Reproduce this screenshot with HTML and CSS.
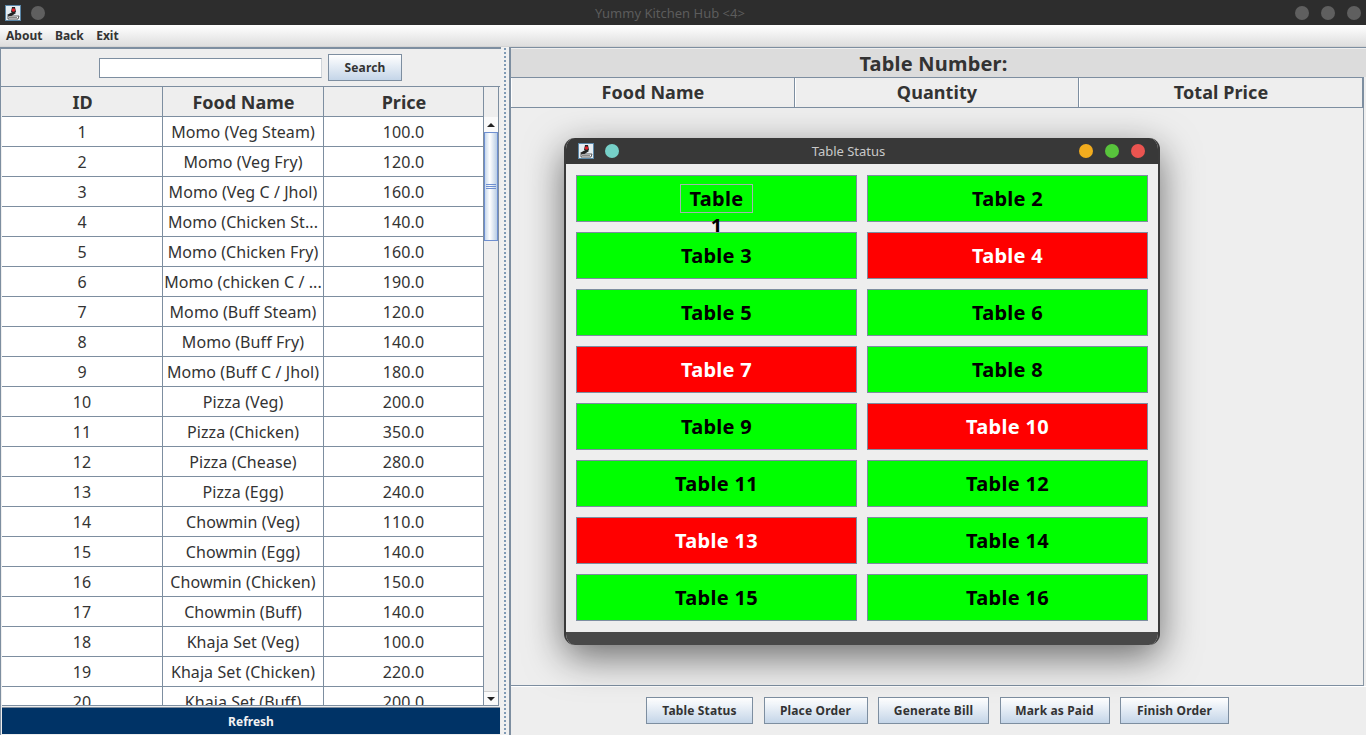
FILE: index.html
```html
<!DOCTYPE html>
<html lang="en">
<head>
    <meta charset="UTF-8">
    <title>Yummy Kitchen Hub</title>
    <link rel="stylesheet" href="styles.css">
</head>
<body>
    <div class="titlebar">
        <svg class="app-icon" viewBox="0 0 16 16"><rect x="0.5" y="0.5" width="15" height="15" fill="#e6edf2" stroke="#5b87a8"/><path d="M7 2h3l1 5H6z" fill="#222"/><path d="M2 10l7-4 2 2-6 4z" fill="#222"/><circle cx="8.5" cy="5" r="1.800" fill="#e0202a"/><path d="M3 11h11l-1 3H3z" fill="#fff" stroke="#333" stroke-width="0.800"/><path d="M4 12.500h8" stroke="#888"/></svg>
        <span class="dot grey first"></span>
        <div class="title-text">Yummy Kitchen Hub &lt;4&gt;</div>
        <span class="dot grey"></span>
        <span class="dot grey"></span>
        <span class="dot grey"></span>
    </div>
    <div class="menubar">
        <span>About</span>
        <span>Back</span>
        <span>Exit</span>
    </div>

    <div class="main">
        <div class="left-pane">
            <div class="search-row">
                <input class="search-input" type="text">
                <button class="btn search-btn">Search</button>
            </div>
            <div class="food-list">
                <div class="food-table-wrap">
                    <table class="food-table">
                        <thead>
                            <tr><th>ID</th><th>Food Name</th><th>Price</th></tr>
                        </thead>
                        <tbody>
                            <tr><td>1</td><td>Momo (Veg Steam)</td><td>100.0</td></tr>
                            <tr><td>2</td><td>Momo (Veg Fry)</td><td>120.0</td></tr>
                            <tr><td>3</td><td>Momo (Veg C / Jhol)</td><td>160.0</td></tr>
                            <tr><td>4</td><td>Momo (Chicken St...</td><td>140.0</td></tr>
                            <tr><td>5</td><td>Momo (Chicken Fry)</td><td>160.0</td></tr>
                            <tr><td>6</td><td>Momo (chicken C / ...</td><td>190.0</td></tr>
                            <tr><td>7</td><td>Momo (Buff Steam)</td><td>120.0</td></tr>
                            <tr><td>8</td><td>Momo (Buff Fry)</td><td>140.0</td></tr>
                            <tr><td>9</td><td>Momo (Buff C / Jhol)</td><td>180.0</td></tr>
                            <tr><td>10</td><td>Pizza (Veg)</td><td>200.0</td></tr>
                            <tr><td>11</td><td>Pizza (Chicken)</td><td>350.0</td></tr>
                            <tr><td>12</td><td>Pizza (Chease)</td><td>280.0</td></tr>
                            <tr><td>13</td><td>Pizza (Egg)</td><td>240.0</td></tr>
                            <tr><td>14</td><td>Chowmin (Veg)</td><td>110.0</td></tr>
                            <tr><td>15</td><td>Chowmin (Egg)</td><td>140.0</td></tr>
                            <tr><td>16</td><td>Chowmin (Chicken)</td><td>150.0</td></tr>
                            <tr><td>17</td><td>Chowmin (Buff)</td><td>140.0</td></tr>
                            <tr><td>18</td><td>Khaja Set (Veg)</td><td>100.0</td></tr>
                            <tr><td>19</td><td>Khaja Set (Chicken)</td><td>220.0</td></tr>
                            <tr><td>20</td><td>Khaja Set (Buff)</td><td>200.0</td></tr>
                        </tbody>
                    </table>
                </div>
                <div class="scrollbar">
                    <div class="scroll-head"></div>
                    <div class="scroll-btn"><span class="arrow-up"></span></div>
                    <div class="scroll-thumb"><span class="grip"></span></div>
                    <div class="scroll-track"></div>
                    <div class="scroll-btn down"><span class="arrow-down"></span></div>
                </div>
            </div>
            <button class="refresh-btn">Refresh</button>
        </div>

        <div class="divider"></div>

        <div class="right-pane">
            <div class="table-number">Table Number:</div>
            <div class="order-head">
                <div>Food Name</div>
                <div>Quantity</div>
                <div>Total Price</div>
            </div>
            <div class="order-body"></div>
            <div class="actions">
                <button class="btn action-status">Table Status</button>
                <button class="btn action-place">Place Order</button>
                <button class="btn action-bill">Generate Bill</button>
                <button class="btn action-paid">Mark as Paid</button>
                <button class="btn action-finish">Finish Order</button>
            </div>
        </div>
    </div>

    <div class="status-window">
        <div class="status-title">
            <svg class="app-icon" viewBox="0 0 16 16"><rect x="0.5" y="0.5" width="15" height="15" fill="#e6edf2" stroke="#5b87a8"/><path d="M7 2h3l1 5H6z" fill="#222"/><path d="M2 10l7-4 2 2-6 4z" fill="#222"/><circle cx="8.5" cy="5" r="1.800" fill="#e0202a"/><path d="M3 11h11l-1 3H3z" fill="#fff" stroke="#333" stroke-width="0.800"/><path d="M4 12.500h8" stroke="#888"/></svg>
            <span class="dot teal"></span>
            <div class="status-title-text">Table Status</div>
            <span class="dot orange"></span>
            <span class="dot green"></span>
            <span class="dot red"></span>
        </div>
        <div class="status-grid">
            <div class="tbl free"><span class="focused">Table 1</span></div>
            <div class="tbl free">Table 2</div>
            <div class="tbl free">Table 3</div>
            <div class="tbl busy">Table 4</div>
            <div class="tbl free">Table 5</div>
            <div class="tbl free">Table 6</div>
            <div class="tbl busy">Table 7</div>
            <div class="tbl free">Table 8</div>
            <div class="tbl free">Table 9</div>
            <div class="tbl busy">Table 10</div>
            <div class="tbl free">Table 11</div>
            <div class="tbl free">Table 12</div>
            <div class="tbl busy">Table 13</div>
            <div class="tbl free">Table 14</div>
            <div class="tbl free">Table 15</div>
            <div class="tbl free">Table 16</div>
        </div>
        <div class="status-foot"></div>
    </div>
</body>
</html>
```

FILE: styles.css
```css
* {
    box-sizing: border-box;
}

html, body {
    margin: 0;
    height: 735px;
    overflow: hidden;
}

body {
    position: relative;
    font-family: "Noto Sans", sans-serif;
    background-color: #eeeeee;
    color: #333333;
}

button {
    font-family: inherit;
}

/* main window title */
.titlebar {
    height: 25px;
    background-color: #2d2d2d;
    display: flex;
    align-items: center;
    padding: 0 5px;
}

.app-icon {
    width: 16px;
    height: 16px;
    flex: none;
}

.dot {
    width: 14px;
    height: 14px;
    border-radius: 50%;
    flex: none;
}

.dot.grey {
    background-color: #5f5f5f;
    margin-right: 12px;
}

.dot.grey:last-child {
    margin-right: 0;
}

.dot.first {
    margin-left: 10px;
    margin-right: 0;
}

.title-text {
    flex: 1;
    text-align: center;
    font-size: 13px;
    color: #5c5c5c;
}

.menubar {
    height: 22px;
    background: linear-gradient(#ffffff, #dedede);
    border-bottom: 1px solid #d4d4d4;
    display: flex;
    align-items: center;
    gap: 12.5px;
    padding-left: 6px;
    font-size: 12px;
    font-weight: 700;
}

.main {
    height: 688px;
    display: flex;
}

/* left side */
.left-pane {
    width: 501px;
    flex: none;
    display: flex;
    flex-direction: column;
    border-top: 2px solid #7d8ea0;
    border-left: 1px solid #7d8ea0;
}

.search-row {
    height: 37px;
    flex: none;
    display: flex;
    align-items: center;
    justify-content: center;
    gap: 6px;
    padding-right: 1px;
}

.search-input {
    width: 223px;
    height: 20px;
    border: 1px solid #7d8ea0;
    border-right-color: #d0d5da;
    background-color: #ffffff;
    padding: 0;
}

.btn {
    height: 27px;
    border: 1px solid #7d8ea0;
    background: linear-gradient(#ffffff, #c4d5e8);
    color: #333333;
    font-size: 12px;
    font-weight: 700;
    letter-spacing: 0.15px;
    padding: 0;
}

.search-btn {
    width: 74px;
}

.food-list {
    flex: 1;
    min-height: 0;
    display: flex;
    margin-right: 1px;
    padding-left: 1px;
    border-top: 1px solid #7d8ea0;
}

.food-table-wrap {
    width: 481px;
    flex: none;
    overflow: hidden;
    border-bottom: 1px solid #7d8ea0;
}

.food-table {
    width: 481px;
    border-collapse: separate;
    border-spacing: 0;
    table-layout: fixed;
    background-color: #ffffff;
}

.food-table th {
    height: 30px;
    background-color: #eeeeee;
    font-size: 18px;
    font-weight: 700;
    border-right: 1px solid #7d8ea0;
    border-bottom: 1px solid #7d8ea0;
    padding: 0 0 0 1px;
}

.food-table th:nth-child(1),
.food-table th:nth-child(2) {
    width: 161px;
}

.food-table td {
    height: 30px;
    font-size: 16px;
    letter-spacing: 0.08px;
    text-align: center;
    white-space: nowrap;
    overflow: hidden;
    border-right: 1px solid #7d8ea0;
    border-bottom: 1px solid #7d8ea0;
    padding: 0;
}

.food-table th:last-child,
.food-table td:last-child {
    border-right: 0;
}

.scrollbar {
    width: 16px;
    flex: none;
    display: flex;
    flex-direction: column;
    border-left: 1px solid #7d8ea0;
    border-right: 1px solid #7d8ea0;
    background-color: #eeeeee;
}

.scroll-head {
    height: 30px;
    flex: none;
    background-color: #eeeeee;
}

.scroll-btn {
    height: 15px;
    flex: none;
    background-color: #fafafa;
    display: flex;
    align-items: center;
    justify-content: center;
}

.scroll-btn.down {
    border-top: 1px solid #d0d0d0;
    border-bottom: 1px solid #7d8ea0;
}

.arrow-up {
    border-left: 4px solid transparent;
    border-right: 4px solid transparent;
    border-bottom: 4px solid #222222;
}

.arrow-down {
    border-left: 4px solid transparent;
    border-right: 4px solid transparent;
    border-top: 4px solid #222222;
}

.scroll-thumb {
    height: 109px;
    flex: none;
    border: 1px solid #6e8fd0;
    background: linear-gradient(to right, #c7d8ec, #ffffff 40%, #b9cde4);
    display: flex;
    align-items: center;
    justify-content: center;
}

.grip {
    width: 10px;
    height: 5px;
    border-top: 1px solid #6e8fd0;
    border-bottom: 1px solid #6e8fd0;
    background: linear-gradient(#6e8fd0, #6e8fd0) center / 100% 1px no-repeat;
}

.scroll-track {
    flex: 1;
}

.refresh-btn {
    height: 27px;
    flex: none;
    border: 0;
    border-top: 1px solid #7d8ea0;
    background-color: #003366;
    color: #f2f2f2;
    font-size: 12px;
    font-weight: 700;
    margin: 1px 1px 1px 1px;
}

.divider {
    width: 8px;
    flex: none;
    background-image: radial-gradient(circle, #7f9ab5 0.8px, transparent 1px);
    background-size: 8px 4px;
    background-color: #f0f0f0;
}

/* right side */
.right-pane {
    flex: 1;
    display: flex;
    flex-direction: column;
    border-top: 1px solid #7d8ea0;
    border-left: 2px solid #7d8ea0;
}

.table-number {
    height: 29px;
    flex: none;
    background-color: #dcdcdc;
    text-align: center;
    font-size: 20px;
    font-weight: 700;
    letter-spacing: 0.2px;
    line-height: 29px;
    padding-right: 10px;
    border-top: 1px solid #eeeeee;
}

.order-head {
    height: 31px;
    flex: none;
    margin-right: 2px;
    display: grid;
    grid-template-columns: 284px 284px 1fr;
    border-top: 1px solid #7d8ea0;
    border-bottom: 1px solid #7d8ea0;
    border-right: 2px solid #7d8ea0;
    font-size: 18px;
    font-weight: 700;
    letter-spacing: 0.08px;
}

.order-head div {
    text-align: center;
    line-height: 29px;
    border-left: 1px solid #ffffff;
    border-right: 1px solid #7d8ea0;
}

.order-head div:last-child {
    border-right: 0;
}

.order-body {
    height: 578px;
    flex: none;
    margin-right: 2px;
    border-right: 1px solid #8a97a5;
    border-bottom: 1px solid #7d8ea0;
}

.actions {
    flex: 1;
    display: flex;
    justify-content: center;
    gap: 10.5px;
    padding-top: 10px;
    padding-right: 2px;
    border-top: 1px solid #ffffff;
}

.action-status { width: 107px; }
.action-place { width: 104px; }
.action-bill { width: 111px; }
.action-paid { width: 110px; }
.action-finish { width: 109px; }

/* floating dialog */
.status-window {
    position: absolute;
    left: 564px;
    top: 138px;
    width: 596px;
    height: 507px;
    display: flex;
    flex-direction: column;
    border-radius: 11px;
    overflow: hidden;
    border-left: 2px solid #3a3a3a;
    border-right: 2px solid #3a3a3a;
    background-color: #eeeeee;
    box-shadow: 0 12px 38px rgba(0, 0, 0, 0.55);
}

.status-title {
    height: 26px;
    flex: none;
    background-color: #383838;
    display: flex;
    align-items: center;
    padding: 0 13px 0 12px;
}

.dot.teal {
    background-color: #76d0c8;
    margin-left: 11px;
}

.status-title-text {
    flex: 1;
    text-align: center;
    font-size: 13px;
    color: #c8c8c8;
    padding-right: 1px;
}

.dot.orange {
    background-color: #f2ac1e;
    margin-right: 12px;
}

.dot.green {
    background-color: #58c43c;
    margin-right: 12px;
}

.dot.red {
    background-color: #ea5450;
}

.status-grid {
    flex: 1;
    display: grid;
    grid-template-columns: 281px 281px;
    grid-auto-rows: 47px;
    gap: 10px;
    padding: 11px 10px 0;
}

.tbl {
    display: flex;
    align-items: center;
    justify-content: center;
    font-size: 20px;
    font-weight: 700;
    letter-spacing: 0.3px;
    border: 1px solid #7d8ea0;
}

.tbl.free {
    background-color: #00ff00;
    color: #000000;
}

.tbl.busy {
    background-color: #ff0000;
    color: #ffffff;
}

.focused {
    border: 1px solid #a3b3b0;
    width: 73px;
    height: 29px;
    line-height: 27px;
    text-align: center;
}

.status-foot {
    height: 13px;
    flex: none;
    background-color: #484848;
}
```
